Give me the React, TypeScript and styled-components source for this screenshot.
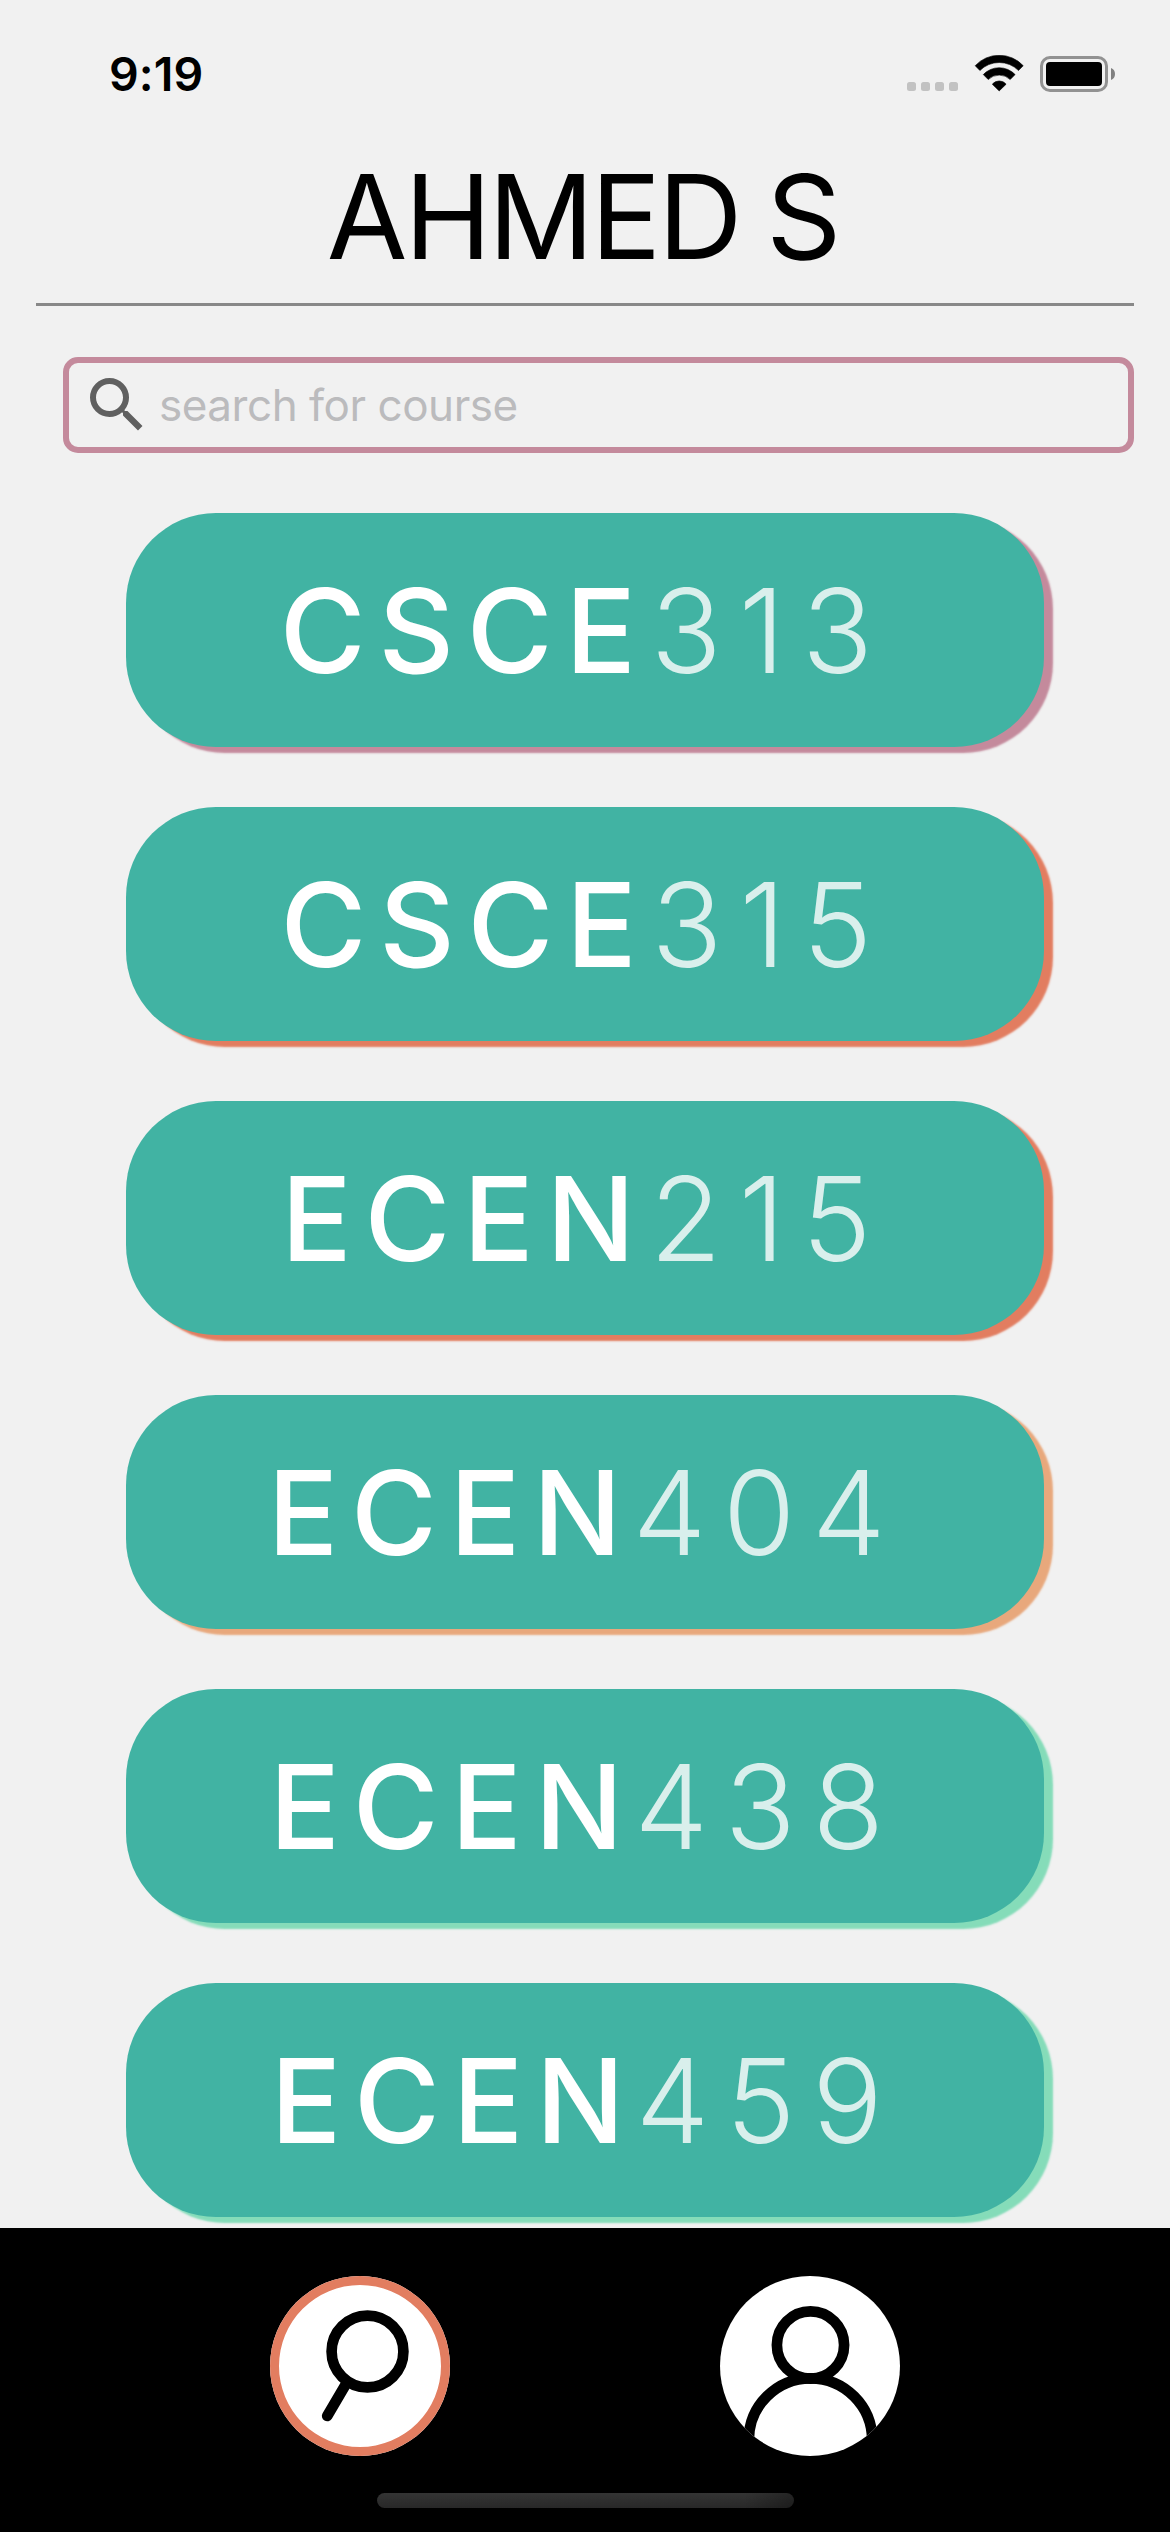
import React from "react";
import styled, { createGlobalStyle } from "styled-components";

const GlobalStyle = createGlobalStyle`
  * { box-sizing: border-box; }
  body { margin: 0; background: #f1f1f1; }
`;

const Screen = styled.div`
  display: flex;
  flex-direction: column;
  width: 1170px;
  height: 2532px;
  overflow: hidden;
  background: #f1f1f1;
  color: #000;
  font-family: Inter, "Liberation Sans", sans-serif;
`;

const StatusBar = styled.div`
  flex: none;
  display: flex;
  justify-content: space-between;
  align-items: flex-start;
  height: 141px;
  padding: 55px 55px 0 109px;
`;

const Clock = styled.time`
  font-size: 46.5px;
  line-height: 39px;
  font-weight: 600;
  letter-spacing: 0.1px;
`;

const StatusIcons = styled.svg`
  width: 210px;
  height: 38px;
`;

const Title = styled.h1`
  flex: none;
  height: 165px;
  margin: 0 36px;
  padding: 5px 5px 0 0;
  border-bottom: 3px solid #888;
  font-size: 117px;
  line-height: 142px;
  font-weight: 400;
  letter-spacing: -3.1px;
  word-spacing: -3px;
  text-align: center;
`;

const SearchBox = styled.label`
  flex: none;
  display: flex;
  align-items: center;
  height: 96px;
  margin: 51px 36px 0 63px;
  padding: 0 12px;
  border: 6px solid #c48a9c;
  border-radius: 15px;
`;

const SearchGlyph = styled.svg`
  width: 72px;
  height: 72px;
  fill: #606060;
`;

const SearchInput = styled.input`
  flex: 1;
  min-width: 0;
  margin-left: 6px;
  padding: 0 0 1px;
  border: 0;
  outline: 0;
  background: transparent;
  font: 400 44px Inter, "Liberation Sans", sans-serif;
  letter-spacing: -0.47px;
  &::placeholder { color: #bbbbbd; opacity: 1; }
`;

const CourseList = styled.main`
  flex: 1;
  min-height: 0;
  display: flex;
  flex-direction: column;
  gap: 60px;
  padding: 60px 126px 0;
  overflow: hidden;
`;

const CourseButton = styled.button<{ $shadow: string }>`
  flex: none;
  display: flex;
  justify-content: center;
  align-items: center;
  height: 234px;
  padding: 2px 0 0;
  border: 0;
  border-radius: 90px;
  background: #41b3a3;
  box-shadow: 9px 6px 2px ${(p) => p.$shadow};
  color: #fff;
  font: 500 117px/142px Inter, "Liberation Sans", sans-serif;
  letter-spacing: 12.8px;
`;

const CourseNumber = styled.span<{ $tight: boolean }>`
  margin-left: ${(p) => (p.$tight ? "-1.5px" : "2px")};
  font-weight: 300;
  letter-spacing: ${(p) => (p.$tight ? "16.7px" : "17.2px")};
  opacity: 0.8;
`;

const TabBar = styled.nav`
  flex: none;
  display: flex;
  flex-direction: column;
  justify-content: space-between;
  align-items: center;
  height: 304px;
  padding: 48px 0 24px;
  background: #000;
`;

const Tabs = styled.div`
  display: flex;
  gap: 270px;
`;

const Tab = styled.button<{ $active?: boolean }>`
  width: 180px;
  height: 180px;
  padding: 0;
  border: 0;
  border-radius: 50%;
  overflow: hidden;
  background: #fff;
  box-shadow: ${(p) => (p.$active ? "inset 0 0 0 9px #e27d60" : "none")};
`;

const TabIcon = styled.svg`
  display: block;
  width: 180px;
  height: 180px;
  fill: none;
  stroke: #000;
  stroke-width: 10.7;
  stroke-linecap: round;
`;

const HomeIndicator = styled.div`
  width: 417px;
  height: 15px;
  border-radius: 8px;
  background: linear-gradient(90deg, transparent 88%, rgba(0, 0, 0, 0.3)),
    linear-gradient(#343434, #282828);
`;

const courses = [
  { dept: "CSCE", number: "313", shadow: "#c48a9c" },
  { dept: "CSCE", number: "315", shadow: "#e27d60" },
  { dept: "ECEN", number: "215", shadow: "#e27d60" },
  { dept: "ECEN", number: "404", shadow: "#e8a87c" },
  { dept: "ECEN", number: "438", shadow: "#85dcb9" },
  { dept: "ECEN", number: "459", shadow: "#85dcb9" },
];

export default function App() {
  return (
    <>
      <GlobalStyle />
      <Screen>
        <StatusBar>
          <Clock>9:19</Clock>
          <StatusIcons viewBox="0 0 210 38">
            {[2, 16, 30, 44].map((x) => (
              <rect key={x} x={x} y="27" width="9" height="9" rx="2.5" fill="#c2c2c2" />
            ))}
            <g strokeWidth="0.6" stroke="#000" strokeLinejoin="round">
              <path d="M70.200 10.700A32.700 32.700 0 0 1 118.200 10.700L113.500 15.500A27.300 27.300 0 0 0 74.900 15.500Z" />
              <path d="M78.300 19.600A21.800 21.800 0 0 1 110.100 19.600L105.200 24.500A16 16 0 0 0 83.200 24.500Z" />
              <path d="M87.300 29.200A8.900 8.900 0 0 1 101.100 29.200L94.200 35.900Z" />
            </g>
            <rect x="136.500" y="2.500" width="65" height="33" rx="8.500" fill="none" stroke="#929292" strokeWidth="3" />
            <rect x="141" y="7" width="56" height="24" rx="4" />
            <path d="M206 13a6.500 6.500 0 0 1 0 12z" fill="#808080" />
          </StatusIcons>
        </StatusBar>
        <Title>AHMED S</Title>
        <SearchBox>
          <SearchGlyph viewBox="0 0 24 24">
            <path d="M15.500 14h-.79l-.28-.27A6.471 6.471 0 0 0 16 9.500 6.500 6.500 0 1 0 9.500 16c1.610 0 3.090-.59 4.230-1.570l.27.28v.79l5 4.990L20.490 19l-4.990-5zm-6 0C7.010 14 5 11.990 5 9.500S7.010 5 9.500 5 14 7.010 14 9.500 11.990 14 9.500 14z" />
          </SearchGlyph>
          <SearchInput placeholder="search for course" />
        </SearchBox>
        <CourseList>
          {courses.map((c) => (
            <CourseButton key={c.number} $shadow={c.shadow}>
              {c.dept}
              <CourseNumber $tight={c.number.startsWith("4")}>{c.number}</CourseNumber>
            </CourseButton>
          ))}
        </CourseList>
        <TabBar>
          <Tabs>
            <Tab $active aria-label="Search">
              <TabIcon viewBox="0 0 180 180">
                <circle cx="97.500" cy="75.500" r="35.900" />
                <path d="M76 108L57.200 140" />
              </TabIcon>
            </Tab>
            <Tab aria-label="Profile">
              <TabIcon viewBox="0 0 180 180">
                <circle cx="90.500" cy="69" r="33.600" />
                <circle cx="90.500" cy="164" r="61.700" />
              </TabIcon>
            </Tab>
          </Tabs>
          <HomeIndicator />
        </TabBar>
      </Screen>
    </>
  );
}
